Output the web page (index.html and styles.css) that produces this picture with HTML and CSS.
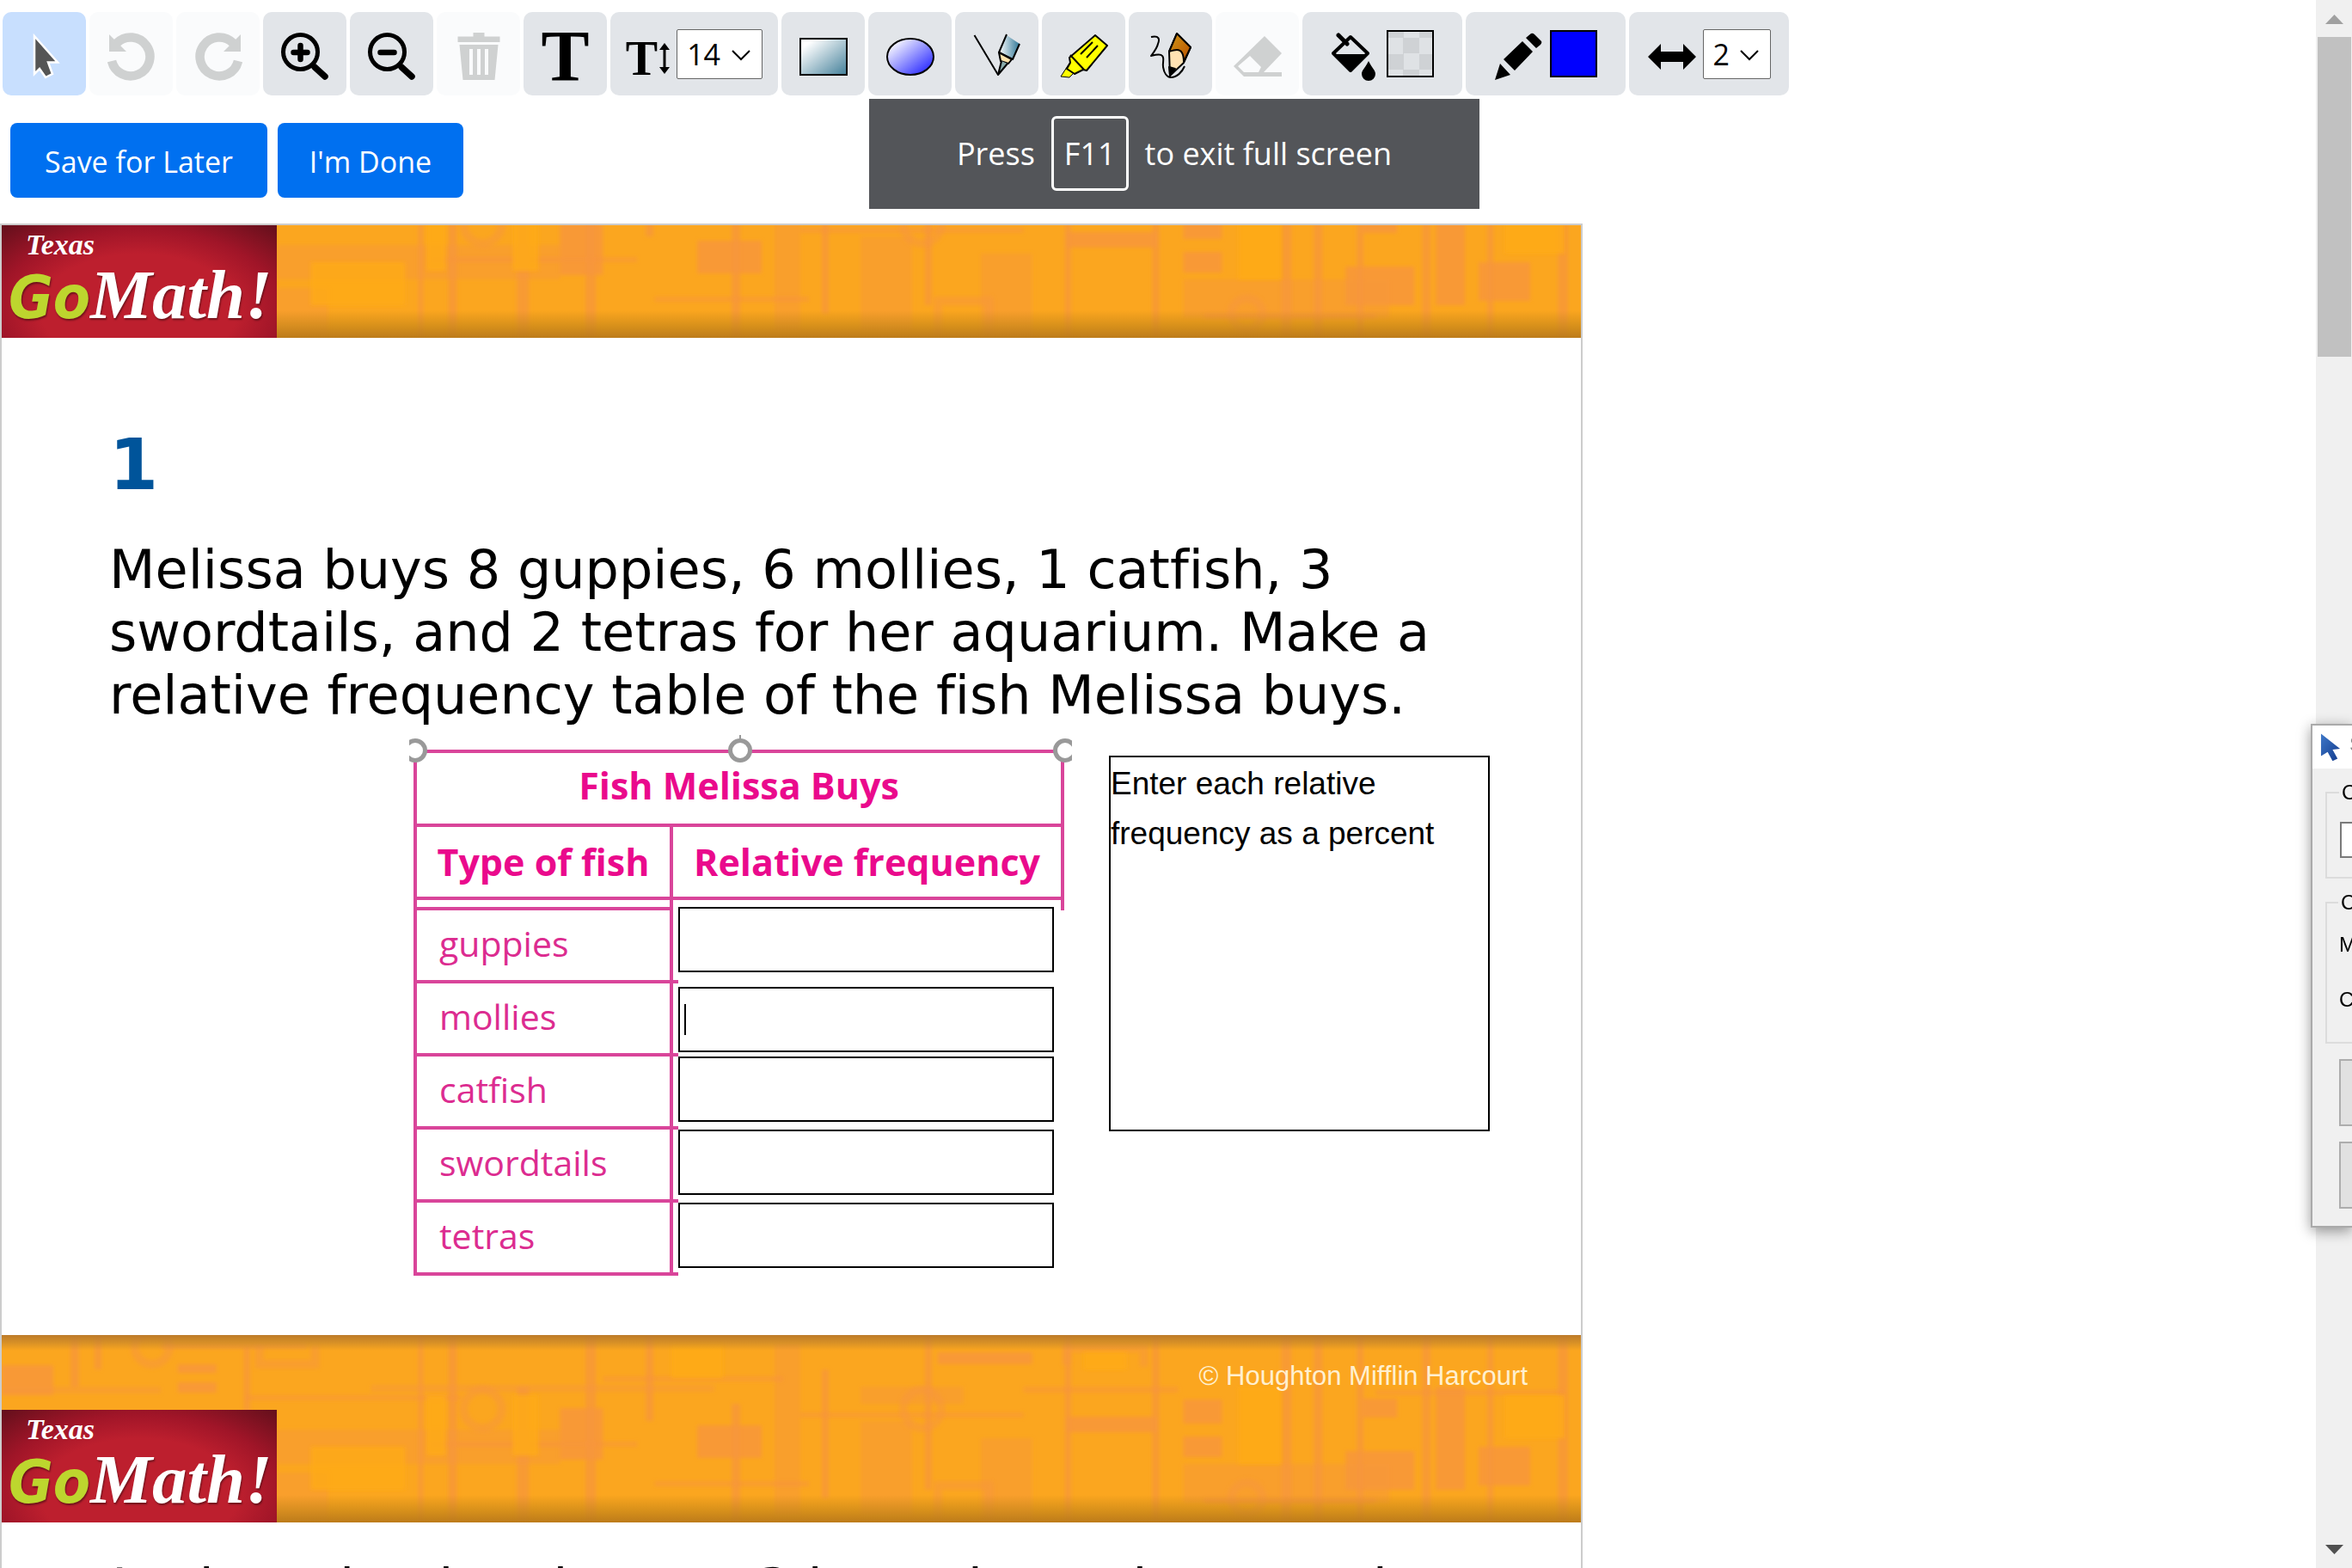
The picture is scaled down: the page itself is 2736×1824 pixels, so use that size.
FILE: index.html
```html
<!DOCTYPE html>
<html lang="en">
<head>
<meta charset="utf-8">
<title>Texas Go Math!</title>
<link rel="stylesheet" href="styles.css">
</head>
<body>
<svg class="defs" aria-hidden="true">
  <defs>
    <linearGradient id="steel" x1="0" y1="0" x2="1" y2="1"><stop offset=".15" stop-color="#fff"/><stop offset="1" stop-color="#427f99"/></linearGradient>
    <linearGradient id="blue" x1="0" y1="0" x2="1" y2="1"><stop offset=".1" stop-color="#fff"/><stop offset=".9" stop-color="#2a2aff"/></linearGradient>
    <linearGradient id="barrel" x1="0" y1="0" x2="1" y2="0"><stop offset="0" stop-color="#fff"/><stop offset="1" stop-color="#2f7797"/></linearGradient>
    <linearGradient id="wood" x1="0" y1="0" x2="1" y2="1"><stop offset=".3" stop-color="#c98210"/><stop offset="1" stop-color="#b84e00"/></linearGradient>
    <linearGradient id="cursorBlue" x1="0" y1="0" x2="1" y2="1"><stop offset="0" stop-color="#3f78c8"/><stop offset="1" stop-color="#123a8c"/></linearGradient>
    <filter id="soft"><feGaussianBlur stdDeviation="2"/></filter>
    <symbol id="circuit" viewBox="0 0 1839 218" preserveAspectRatio="none">
      <rect width="1839" height="218" fill="#fba61f"/>
      <g fill="#f7963c" filter="url(#soft)">
        <path opacity=".8" d="M0 35h60v35H0zM205 55h45v12h-45zM205 34h45v10h-45zM650 85h50v60h-50zM810 105h75v38h-75zM1090 20h110v14h-110zM1240 95h105v18h-105zM1376 75h45v28h-45zM1376 118h45v24h-45zM1585 74h40v22h-40zM1565 135h80v45h-80zM1670 60h34v120h-34zM1720 130h60v45h-60z"/>
        <path opacity=".45" d="M320 110h330v40H320zM0 60h185v8H0zM430 58h400v8H430zM320 160h60v55h-60zM900 10h30v200h-30zM1000 60h120v20h-120zM1000 100h60v110h-60zM1140 120h60v98h-60zM1376 150h240v45h-240z"/>
        <path opacity=".7" d="M80 0h10v60H80zM108 0h8v40h-8zM282 15h7v90h-7zM485 0h6v218h-6zM520 0h10v218h-10zM600 60h14v158h-14zM680 0h12v218h-12zM750 0h9v100h-9zM850 80h10v138h-10zM955 40h8v150h-8zM1075 0h8v180h-8zM1238 0h7v218h-7zM1340 0h8v218h-8zM1490 0h12v218h-12zM1528 0h10v218h-10zM1578 0h8v218h-8zM1654 0h10v218h-10zM1730 0h7v218h-7zM1812 0h12v218h-12z"/>
        <path opacity=".55" d="M185 10h170v6H185zM285 70h250v6H285zM500 124h240v6H500zM700 48h210v6H700zM760 170h180v6H760zM930 90h260v6H930zM1190 60h180v7h-180zM1400 190h200v6h-200zM1600 64h220v6h-220z"/>
      </g>
      <g fill="none" stroke="#f7963c" stroke-width="10" opacity=".5" filter="url(#soft)">
        <circle cx="560" cy="86" r="22"/><circle cx="1072" cy="86" r="22"/><circle cx="175" cy="14" r="20"/><circle cx="1450" cy="190" r="18"/>
        <path d="M300 12v22h65V12M1240 35v-20h90v22M1090 215v-40h60v40"/>
      </g>
      <g fill="#ffab12" opacity=".8" filter="url(#soft)"><path d="M495 70h22v70h-22zM595 70h30v70h-30zM360 130h110v50H360zM1440 60h50v90h-50zM1260 20h50v20h-50zM780 10h60v40h-60zM1750 70h70v50h-70z"/></g>
    </symbol>
  </defs>
</svg>

<div class="window">
  <div class="viewport">
    <div class="toolbar" role="toolbar" aria-label="Drawing tools">
      <button class="tool tool-active" aria-label="Select"><svg viewBox="0 0 56 56"><path d="M16 4v44l6-6 7 10 8-4-5-13.500h11z" fill="#555" stroke="#fff" stroke-width="2.500"/></svg></button>
      <button class="tool" aria-label="Undo" disabled><svg viewBox="0 0 56 56"><path d="M5 33a22.500 22.500 0 1 0 6-21" fill="none" stroke="#cfd1d1" stroke-width="10.500"/><path d="M2 2v20h20z" fill="#cfd1d1"/></svg></button>
      <button class="tool" aria-label="Redo" disabled><svg viewBox="0 0 56 56"><path d="M51 33a22.500 22.500 0 1 1-6-21" fill="none" stroke="#cfd1d1" stroke-width="10.500"/><path d="M54 2v20H34z" fill="#cfd1d1"/></svg></button>
      <button class="tool" aria-label="Zoom in"><svg viewBox="0 0 56 56" fill="none" stroke="#000" stroke-linecap="round"><circle cx="22.500" cy="22.500" r="20" stroke-width="5"/><path d="M14.500 23h16M22.500 15v16" stroke-width="6.500"/><path d="M39 40l12 11" stroke-width="7.500"/></svg></button>
      <button class="tool" aria-label="Zoom out"><svg viewBox="0 0 56 56" fill="none" stroke="#000" stroke-linecap="round"><circle cx="22.500" cy="22.500" r="20" stroke-width="5"/><path d="M14.500 23h16" stroke-width="6.500"/><path d="M39 40l12 11" stroke-width="7.500"/></svg></button>
      <button class="tool" aria-label="Delete" disabled><svg viewBox="0 0 56 56" fill="#cfd1d1"><path fill-rule="evenodd" d="M3.500 4.500h18V0h13v4.500h18v6.500h-49zM5.500 14h45l-4 41h-37zM17 19v30h4V19zM26 19v30h4V19zM35 19v30h4V19z"/></svg></button>
      <button class="tool glyph-large" aria-label="Text">T</button>
      <div class="tool tool-size">
        <label class="size-label" for="font-size"><span class="glyph-small">T</span><svg class="size-arrow" viewBox="0 0 12 36"><path d="M6 0l6 8H7.500v20H12l-6 8-6-8h4.500V8H0z"/></svg></label>
        <select id="font-size" class="picker picker-wide" aria-label="Font size"><option>14</option></select>
      </div>
      <button class="tool" aria-label="Rectangle"><svg viewBox="0 0 56 56"><rect x="1" y="7" width="54" height="42" fill="url(#steel)" stroke="#000" stroke-width="2"/></svg></button>
      <button class="tool" aria-label="Ellipse"><svg viewBox="0 0 56 56"><ellipse cx="28" cy="28" rx="27" ry="21" fill="url(#blue)" stroke="#000" stroke-width="2"/></svg></button>
      <button class="tool" aria-label="Line"><svg viewBox="0 0 56 56" stroke="#000" stroke-width="2" stroke-linejoin="round"><path d="M39 3L54 13 46 31 30 23z" fill="url(#barrel)" stroke="none"/><path d="M1.500 3L29 49M39 2l-9 21 16 8 8-18" fill="none"/><path d="M30 23l15 8-4 5-9-3z" fill="#fde3ac"/><path d="M33 33l-4 16L40 36" fill="#8aa"/></svg></button>
      <button class="tool" aria-label="Highlighter"><svg viewBox="0 0 56 56" stroke="#000" stroke-width="2" stroke-linejoin="round"><path d="M12 34L1 51l10 1 6-6z" fill="#ff0" stroke-width="1"/><path d="M41 3l14 12-24 29-4-1-10 5-9-6 4-7-1-6z" fill="#ff0"/><path d="M12 26l16 17M38 11L24 25M44 15L31 29" fill="none"/></svg></button>
      <button class="tool" aria-label="Free draw"><svg viewBox="0 0 56 56" stroke="#000" stroke-width="2" stroke-linejoin="round"><path d="M35 1l16 16-8 18-16 15-1-28z" fill="#ffe2b3"/><path d="M35 1l16 16-8 17c0-7-2-14-8-14-3 0-6 1-9 2z" fill="url(#wood)"/><path d="M26 40l7 2-6 8z"/><path d="M5 5c10-2 10 3 8 8-1 5-5 10-8 14 4-1 11-3 13 0 3 3 0 8 1 13 1 6 4 12 9 12 7 0 13-6 16-13" fill="none"/></svg></button>
      <button class="tool" aria-label="Eraser" disabled><svg viewBox="0 0 56 56" fill="#cfd1d1"><path fill-rule="evenodd" d="M36 4l20 20-21 22h21v5H12L0 39zM19 27L5 39l7 7h17l3-6z"/></svg></button>
      <button class="tool tool-wide" aria-label="Fill colour"><svg viewBox="0 0 56 56"><path d="M22 5l20 19-20 20L2 24z" fill="none" stroke="#000" stroke-width="4" stroke-linejoin="round"/><path d="M2 25h41L22 46zM43 33c4 8 8 11 8 15a8 8 0 0 1-16 0c0-4 4-7 8-15z"/><path d="M8 3l10 10" stroke="#000" stroke-width="5" stroke-linecap="round"/></svg><span class="swatch swatch-clear"></span></button>
      <button class="tool tool-wide" aria-label="Line colour"><svg viewBox="0 0 56 56"><path d="M42 1q2-1 4 1l8 8q1 2-1 4l-5 4L36 6zM32 10l12 12-21 22L10 31zM6 36l12 13L0 55z"/></svg><span class="swatch swatch-blue"></span></button>
      <div class="tool tool-wide">
        <label for="line-width"><svg viewBox="0 0 56 56"><path d="M0 28l15-15v9h26v-9l15 15-15 15v-9H15v9z"/></svg></label>
        <select id="line-width" class="picker" aria-label="Line width"><option>2</option></select>
      </div>
    </div>

    <div class="actions">
      <button class="action action-save">Save for Later</button>
      <button class="action action-done">I'm Done</button>
    </div>

    <main class="document">
      <section class="sheet">
        <header class="band band-top">
          <svg class="band-art"><use href="#circuit" y="-87" width="100%" height="218"/></svg>
          <div class="logo"><span class="logo-state">Texas</span><span class="logo-name"><span class="logo-go">Go</span><span class="logo-math">Math!</span></span></div>
        </header>
        <div class="question">
          <h1 class="number">1</h1>
          <p class="prompt">Melissa buys 8 guppies, 6 mollies, 1 catfish, 3 swordtails, and 2 tetras for her aquarium. Make a relative frequency table of the fish Melissa buys.</p>
          <div class="work">
            <div class="figure">
              <table class="fish">
                <colgroup><col class="col-type"><col></colgroup>
                <thead>
                  <tr class="row-title"><th colspan="2">Fish Melissa Buys</th></tr>
                  <tr class="row-head"><th scope="col">Type of fish</th><th scope="col">Relative frequency</th></tr>
                  <tr class="row-gap"><td></td><td></td></tr>
                </thead>
                <tbody>
                  <tr><th scope="row"><label for="guppies">guppies</label></th><td><input id="guppies" class="answer answer-raised" type="text"></td></tr>
                  <tr><th scope="row"><label for="mollies">mollies</label></th><td><input id="mollies" class="answer answer-editing" type="text"></td></tr>
                  <tr><th scope="row"><label for="catfish">catfish</label></th><td><input id="catfish" class="answer" type="text"></td></tr>
                  <tr><th scope="row"><label for="swordtails">swordtails</label></th><td><input id="swordtails" class="answer" type="text"></td></tr>
                  <tr><th scope="row"><label for="tetras">tetras</label></th><td><input id="tetras" class="answer" type="text"></td></tr>
                </tbody>
              </table>
              <svg class="handles" viewBox="0 0 771 32"><g fill="#fff" stroke="#999" stroke-width="5"><path d="M385 0v6" stroke-width="2"/><circle cx="7" cy="18" r="11.500"/><circle cx="385" cy="18" r="11.500"/><circle cx="763" cy="18" r="11.500"/></g></svg>
            </div>
            <textarea class="note" aria-label="Note" spellcheck="false">Enter each relative frequency as a percent</textarea>
          </div>
        </div>
        <footer class="band band-bottom">
          <svg class="band-art"><use href="#circuit" width="100%" height="218"/></svg>
          <p class="copyright">© Houghton Mifflin Harcourt</p>
        </footer>
      </section>
      <section class="sheet">
        <header class="band band-top">
          <svg class="band-art"><use href="#circuit" y="-87" width="100%" height="218"/></svg>
          <div class="logo"><span class="logo-state">Texas</span><span class="logo-name"><span class="logo-go">Go</span><span class="logo-math">Math!</span></span></div>
        </header>
        <div class="question question-next">
          <h2 class="number">2</h2>
          <p class="prompt">In the school orchestra, 3 in each row have a trio</p>
        </div>
      </section>
    </main>
  </div>

  <div class="scrollbar" aria-hidden="true">
    <svg class="scroll-arrow" viewBox="0 0 42 43"><path d="M11 28l10.500-11L32 28z" fill="#a0a0a0"/></svg>
    <div class="scroll-thumb"></div>
    <svg class="scroll-arrow scroll-down" viewBox="0 0 42 43"><path d="M11 16l10.500 11L32 16z" fill="#505050"/></svg>
  </div>
</div>

<div class="fullscreen-tip" role="status">Press <kbd class="key">F11</kbd> to exit full screen</div>

<aside class="clicker">
  <div class="clicker-title"><svg viewBox="0 0 26 34"><path d="M1 1l23 18-9 1 6 11-6 3-6-11-8 5z" fill="url(#cursorBlue)"/></svg><span>S</span></div>
  <div class="clicker-body">
    <fieldset class="group"><legend>C</legend><input class="group-input" type="text" aria-label="C"></fieldset>
    <fieldset class="group group-tall"><legend>C</legend><p>M</p><p>Cl</p></fieldset>
    <button class="clicker-button" aria-label="Start"></button>
    <button class="clicker-button" aria-label="Stop"></button>
  </div>
</aside>
</body>
</html>
```
FILE: styles.css
```css
* { box-sizing: border-box; }

body {
  margin: 0;
  background: #fff;
  color: #000;
  font-family: "Open Sans", "Noto Sans", sans-serif;
}

button, select, input, textarea { font: inherit; color: inherit; margin: 0; }
h1, h2, p { margin: 0; }
.defs { position: absolute; width: 0; height: 0; }

.window { display: flex; height: 100vh; overflow: hidden; }
.viewport { flex: 1; min-width: 0; overflow: hidden; }

/* Toolbar */
.toolbar { display: flex; gap: 4px; padding: 14px 3px 0; }
.tool {
  display: flex;
  flex: none;
  align-items: center;
  justify-content: center;
  gap: 8px;
  width: 97px;
  height: 97px;
  padding: 6px 0 0;
  border: 0;
  border-radius: 10px;
  background: #e2e5e9;
}
.tool svg { display: block; width: 56px; height: 56px; }
.tool:disabled { background: #fafbfc; }
.tool-active { background: #c8dffe; }
.tool-size { width: 195px; }
.tool-wide { width: 186px; }
.glyph-large, .glyph-small { font-family: "Liberation Serif", serif; font-weight: 700; }
.glyph-large { font-size: 84px; line-height: 84px; }
.glyph-small { font-size: 56px; line-height: 56px; }
.size-label { display: flex; align-items: center; gap: 2px; padding-top: 4px; }
.tool .size-arrow { width: 12px; height: 36px; }

.picker {
  appearance: none;
  width: 79px;
  height: 58px;
  margin-bottom: 6px;
  padding: 0 0 0 11px;
  border: 1px solid #666;
  border-radius: 2px;
  background: #fff url("data:image/svg+xml,%3Csvg xmlns='http://www.w3.org/2000/svg' width='22' height='13'%3E%3Cpath d='M1 1l10 10L21 1' fill='none' stroke='%23000' stroke-width='2'/%3E%3C/svg%3E") no-repeat right 13px top 23px;
  font-size: 34px;
}
.picker-wide { width: 100px; }

.swatch { width: 55px; height: 55px; margin-bottom: 6px; border: 2px solid #000; }
.swatch-clear { background: repeating-conic-gradient(#cfd2d5 0 25%, #dfe2e5 0 50%) -1px 7px / 37px 37px; }
.swatch-blue { background: #00f; }

/* Action buttons */
.actions { display: flex; gap: 12px; padding: 32px 12px 30px; }
.action {
  height: 87px;
  padding: 3px 0 0;
  border: 0;
  border-radius: 8px;
  background: #0070f0;
  color: #fff;
  font-size: 34px;
}
.action-save { width: 299px; }
.action-done { width: 216px; }

/* Assignment pages */
.document {
  max-width: 1841px;
  border: 2px solid #ccc;
  border-bottom: 0;
}
.band { position: relative; display: flex; overflow: hidden; background: #fba61f; }
.band-art { position: absolute; inset: 0; width: 100%; height: 100%; }
.band::after { content: ""; position: absolute; inset: 0; }
.band-top { height: 131px; }
.band-top::after { background: linear-gradient(to top, #b8781aee, #c0821899 14px, #c0821800 32px); }
.band-bottom { height: 87px; justify-content: flex-end; padding: 31px 62px 0 0; }
.band-bottom::after { background: linear-gradient(#b8782bee, #c0822b99 9px, #c0822b00 18px); }
.copyright {
  position: relative;
  z-index: 1;
  color: #fff0d0;
  font: 31px/34px "Liberation Sans", Arial, sans-serif;
}
.logo {
  position: relative;
  z-index: 1;
  width: 320px;
  height: 131px;
  padding: 6px 0 0 8px;
  background: radial-gradient(ellipse 230px 130px at 50% 75%, #bd1f2e 0 50%, #a01528 72%, #2c0a10 130%);
  color: #fff;
  font-family: "Liberation Serif", "Times New Roman", serif;
  font-style: italic;
  font-weight: 700;
  white-space: nowrap;
}
.logo-state { display: block; padding-left: 20px; font-size: 34px; line-height: 34px; }
.logo-name { display: flex; align-items: baseline; font-size: 81px; line-height: 82px; text-shadow: 1px 2px 2px #0006; }
.logo-go { color: #bdd62e; font-family: "DejaVu Sans Condensed", "DejaVu Sans", sans-serif; font-size: 70px; }

.question { padding: 100px 120px 69px 125px; }
.question-next { display: flex; padding-top: 42px; padding-bottom: 0; }
.number { color: #00549a; font: 700 82px/96px "DejaVu Sans", Verdana, sans-serif; }
.question-next .number { margin-left: -82px; padding: 0 28px 0 0; line-height: 92px; }
.prompt {
  margin-top: 37px;
  font: 62px/73px "DejaVu Sans", Verdana, sans-serif;
  font-variant-ligatures: none;
}
.question-next .prompt { margin-top: -2px; white-space: nowrap; }

.work { display: flex; align-items: flex-start; gap: 52px; padding: 27px 0 0 354px; }
.figure { position: relative; flex: none; }
.handles { position: absolute; left: -5px; top: -17px; width: 771px; height: 32px; overflow: hidden; }

.fish {
  width: 757px;
  table-layout: fixed;
  border-collapse: separate;
  border-spacing: 0;
  color: #dc2c90;
  font-size: 41px;
  line-height: 48px;
}
.fish th, .fish td { padding: 0; border: 0 solid #d9459a; }
.col-type { width: 302px; }
.fish thead th { color: #ea0a8c; font-size: 43px; font-weight: 700; }
.fish .row-title th { height: 90px; padding-bottom: 6px; border-width: 4px; }
.row-head th { height: 85px; }
.fish .row-head th, .fish .row-gap td { border-width: 0 4px 4px 0; }
.fish .row-head th:first-child, .fish .row-gap td:first-child { border-left-width: 4px; }
.row-gap td { height: 12px; }
.fish .row-gap td:last-child { border-bottom-width: 0; }
.fish tbody th {
  height: 85px;
  padding: 0 0 6px 26px;
  border-width: 0 4px 4px;
  font-weight: 400;
  text-align: left;
}
.fish tbody td {
  padding-left: 6px;
  vertical-align: top;
  background: linear-gradient(#d9459a, #d9459a) left bottom / 6px 4px no-repeat;
}
.answer {
  display: block;
  width: 437px;
  height: 76px;
  padding: 0 5px;
  border: 2px solid #000;
  border-radius: 0;
  background: #fff;
}
.answer-raised { margin-top: -4px; }
.answer-editing { margin-top: 4px; background: linear-gradient(#000, #000) 5px center / 2px 36px no-repeat #fff; }

.note {
  display: block;
  flex: none;
  width: 443px;
  height: 437px;
  margin-top: 7px;
  padding: 2px 30px 1px 0;
  border: 2px solid #000;
  resize: none;
  font: 37px/58px "Liberation Sans", Arial, sans-serif;
}

/* Scroll bar */
.scrollbar { display: flex; flex: none; flex-direction: column; width: 42px; background: #f0f0f0; }
.scroll-arrow { width: 42px; height: 43px; }
.scroll-thumb { height: 372px; margin: 0 1px 0 2px; background: #c1c1c1; }
.scroll-down { margin-top: auto; }

/* Full screen hint */
.fullscreen-tip {
  position: fixed;
  top: 115px;
  left: 1011px;
  display: flex;
  align-items: center;
  justify-content: center;
  gap: 19px;
  width: 710px;
  height: 128px;
  padding-bottom: 2px;
  background: #535559;
  color: #fff;
  font-size: 36px;
}
.key {
  padding: 0 12px;
  border: 3px solid #fff;
  border-radius: 6px;
  font: inherit;
  line-height: 81px;
}

/* Clicker window, mostly past the screen edge */
.clicker {
  position: fixed;
  top: 842px;
  right: 0;
  width: 48px;
  height: 586px;
  overflow: hidden;
  border: 2px solid #aaa;
  border-right: 0;
  background: #f0f0f0;
  box-shadow: 0 4px 16px #0006;
  font: 24px/28px "Liberation Sans", Arial, sans-serif;
}
.clicker-title { display: flex; gap: 9px; height: 50px; padding: 8px 0 0 9px; background: #fff; color: #888; }
.clicker-title svg { flex: none; width: 25px; height: 34px; }
.clicker-body { padding: 14px 0 0 15px; }
.group { width: 200px; height: 114px; margin: 0 0 14px; padding: 20px 0 0 15px; border: 2px solid #dcdcdc; }
.group-tall { height: 178px; margin-bottom: 18px; padding: 21px 0 0 14px; }
.group legend { margin-left: -1px; padding: 0 3px; }
.group p { margin-bottom: 36px; }
.group-input { display: block; width: 120px; height: 42px; border: 2px solid #7a7a7a; background: #fff; }
.clicker-button { display: block; width: 160px; height: 78px; margin: 0 0 18px 16px; border: 2px solid #adadad; background: #e1e1e1; }
```
